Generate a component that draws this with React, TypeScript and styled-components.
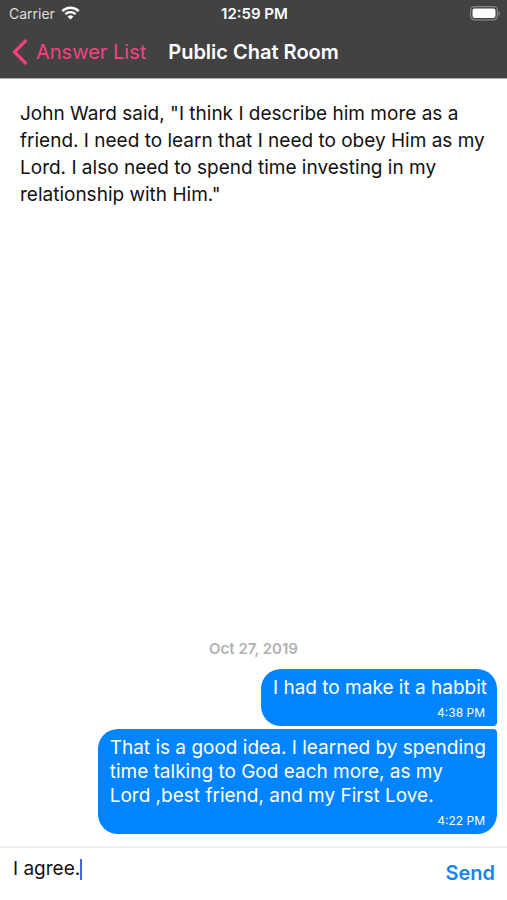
import { useState } from 'react';
import styled, { createGlobalStyle } from 'styled-components';

const GlobalStyle = createGlobalStyle`
  * {
    box-sizing: border-box;
  }

  body {
    margin: 0;
    background: #ffffff;
    color: #111111;
    font-family: Inter, 'Liberation Sans', sans-serif;
  }

  button,
  input {
    font-family: inherit;
  }
`;

const Screen = styled.div`
  display: flex;
  flex-direction: column;
  min-height: 100vh;
`;

const Header = styled.header`
  background: #424242;
  color: #ffffff;
  border-bottom: 1px solid #a9a9a9;
`;

const StatusBar = styled.div`
  display: grid;
  grid-template-columns: 1fr auto 1fr;
  align-items: center;
  height: 28px;
  padding: 0 7px 2px 9px;
`;

const Carrier = styled.span`
  display: flex;
  align-items: center;
  gap: 6px;
  color: #dedede;
  font-size: 14px;
`;

const Clock = styled.span`
  font-size: 15px;
  font-weight: 600;
`;

const BatteryIcon = styled.svg`
  justify-self: end;
`;

const NavBar = styled.nav`
  display: grid;
  grid-template-columns: 1fr auto 1fr;
  align-items: center;
  height: 50px;
  padding: 0 12px 2px;
`;

const BackLink = styled.a`
  display: flex;
  align-items: center;
  gap: 8px;
  color: #f7417f;
  font-size: 20px;
  text-decoration: none;
  white-space: nowrap;
`;

const Title = styled.h1`
  margin: 0;
  font-size: 20px;
  font-weight: 600;
  white-space: nowrap;
`;

const Question = styled.p`
  margin: 0;
  padding: 21px 20px;
  font-size: 19px;
  line-height: 27px;
`;

const Messages = styled.main`
  display: flex;
  flex: 1;
  flex-direction: column;
  justify-content: flex-end;
  align-items: flex-end;
  gap: 3px;
  padding: 0 10px 12px;
`;

const DateLabel = styled.time`
  align-self: center;
  margin-bottom: 8px;
  color: #b2b2b2;
  font-size: 15px;
  font-weight: 600;
  line-height: 18px;
`;

const Bubble = styled.article<{ $first?: boolean; $last?: boolean }>`
  display: flex;
  flex-direction: column;
  max-width: 82%;
  padding: 7px 10px 4px 12px;
  background: #0084ff;
  color: #ffffff;
  border-radius: 20px;
  border-top-right-radius: ${({ $first }) => ($first ? '20px' : '4px')};
  border-bottom-right-radius: ${({ $last }) => ($last ? '20px' : '4px')};
`;

const BubbleText = styled.p`
  margin: 0;
  font-size: 19px;
  line-height: 24px;
`;

const BubbleTime = styled.time`
  align-self: flex-end;
  margin: 4px 2px 0 0;
  font-size: 12px;
  line-height: 18px;
`;

const Composer = styled.form`
  display: flex;
  justify-content: space-between;
  align-items: flex-start;
  min-height: 54px;
  padding: 9px 12px 0 13px;
  border-top: 2px solid #eeeeee;
`;

const Field = styled.label`
  display: flex;
  flex: 1;
  align-items: center;
  cursor: text;
`;

const MessageInput = styled.input`
  field-sizing: content;
  max-width: 100%;
  padding: 0;
  border: 0;
  outline: 0;
  background: transparent;
  caret-color: transparent;
  color: #111111;
  font-size: 19px;
  line-height: 24px;
`;

const Caret = styled.span`
  width: 2px;
  height: 21px;
  background: #4267e8;
`;

const SendButton = styled.button`
  margin-top: 4px;
  padding: 0;
  border: 0;
  background: transparent;
  color: #1485ee;
  font-size: 20px;
  font-weight: 600;
  line-height: 24px;
  cursor: pointer;
`;

interface IMessage {
  text: string;
  time: string;
}

const messages: IMessage[] = [
  { text: 'I had to make it a habbit', time: '4:38 PM' },
  {
    text: 'That is a good idea. I learned by spending time talking to God each more, as my Lord ,best friend, and my First Love.',
    time: '4:22 PM',
  },
];

const App: React.FC = () => {
  const [draft, setDraft] = useState('I agree.');

  return (
    <Screen>
      <GlobalStyle />
      <Header>
        <StatusBar>
          <Carrier>
            Carrier
            <svg width="19" height="14" viewBox="0 0 19 14" fill="none" aria-hidden="true">
              <path d="M1.3 5.1a11.7 11.7 0 0 1 16.4 0" stroke="#fff" strokeWidth="2.5" />
              <path d="M4.4 8.2a7.3 7.3 0 0 1 10.2 0" stroke="#fff" strokeWidth="2.4" />
              <path d="M9.5 13.6 6.6 10.7a4.1 4.1 0 0 1 5.8 0z" fill="#fff" />
            </svg>
          </Carrier>
          <Clock>12:59 PM</Clock>
          <BatteryIcon width="30" height="15" viewBox="0 0 30 15" fill="none" aria-hidden="true">
            <rect x=".6" y=".6" width="26.8" height="13.3" rx="4" stroke="#858585" strokeWidth="1.2" />
            <rect x="2.5" y="2.5" width="23" height="9.5" rx="2.3" fill="#fff" />
            <path d="M28.5 5v4.6c.9-.4 1.5-1.2 1.5-2.3s-.6-1.900-1.5-2.3z" fill="#858585" />
          </BatteryIcon>
        </StatusBar>
        <NavBar>
          <BackLink href="#answers">
            <svg width="16" height="26" viewBox="0 0 16 26" fill="none" aria-hidden="true">
              <path d="M14.3 1.2 2.5 13l11.8 11.8" stroke="currentColor" strokeWidth="3.3" />
            </svg>
            Answer List
          </BackLink>
          <Title>Public Chat Room</Title>
        </NavBar>
      </Header>
      <Question>
        John Ward said, "I think I describe him more as a friend. I need to learn that I need to
        obey Him as my Lord. I also need to spend time investing in my relationship with Him."
      </Question>
      <Messages>
        <DateLabel dateTime="2019-10-27">Oct 27, 2019</DateLabel>
        {messages.map(({ text, time }, i) => (
          <Bubble key={time} $first={i === 0} $last={i === messages.length - 1}>
            <BubbleText>{text}</BubbleText>
            <BubbleTime>{time}</BubbleTime>
          </Bubble>
        ))}
      </Messages>
      <Composer onSubmit={(e) => e.preventDefault()}>
        <Field>
          <MessageInput
            aria-label="Message"
            value={draft}
            onChange={(e) => setDraft(e.target.value)}
          />
          <Caret />
        </Field>
        <SendButton type="submit">Send</SendButton>
      </Composer>
    </Screen>
  );
};

export default App;
